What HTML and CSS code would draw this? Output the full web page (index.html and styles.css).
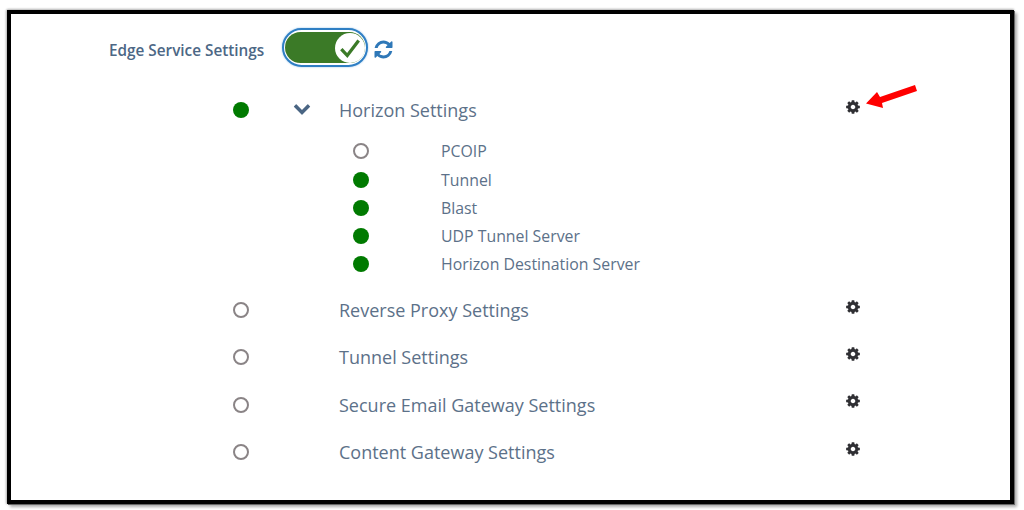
FILE: index.html
```html
<!DOCTYPE html>
<html lang="en">
<head>
    <meta charset="UTF-8">
    <meta name="viewport" content="width=device-width, initial-scale=1.0">
    <title>Edge Service Settings</title>
    <link rel="stylesheet" href="styles.css">
</head>
<body>
    <svg width="0" height="0" class="icon-defs">
        <symbol id="cog" viewBox="0 0 1792 1792">
            <path d="M1152 896q0-106-75-181t-181-75-181 75-75 181 75 181 181 75 181-75 75-181zm512-109v222q0 12-8 23t-20 13l-185 28q-19 54-39 91 35 50 107 138 10 12 10 25t-9 23q-27 37-99 108t-94 71q-12 0-26-9l-138-108q-44 23-91 38-16 136-29 186-7 28-36 28h-222q-14 0-24.500-8.500t-11.500-21.500l-28-184q-49-16-90-37l-141 107q-10 9-25 9-14 0-25-11-126-114-165-168-7-10-7-23 0-12 8-23 15-21 51-66.500t54-70.500q-27-50-41-99l-183-27q-13-2-21-12.500t-8-23.500v-222q0-12 8-23t19-13l186-28q14-46 39-92-40-57-107-138-10-12-10-24 0-10 9-23 26-36 98.500-107.500t94.500-71.500q13 0 26 10l138 107q44-23 91-38 16-136 29-186 7-28 36-28h222q14 0 24.500 8.500t11.500 21.500l28 184q49 16 90 37l142-107q9-9 24-9 13 0 25 10 129 119 165 170 7 8 7 22 0 12-8 23-15 21-51 66.500t-54 70.500q26 50 41 98l183 28q13 2 21 12.500t8 23.500z"/>
        </symbol>
    </svg>

    <div class="frame">
        <!-- Top switch -->
        <div class="service-head">
            <span class="service-title">Edge Service Settings</span>
            <span class="toggle">
                <span class="toggle-track">
                    <span class="toggle-knob">
                        <svg viewBox="0 0 24 24" class="toggle-check"><path d="M4 13l5.500 6L20 5"/></svg>
                    </span>
                </span>
            </span>
            <svg class="refresh" viewBox="0 0 1792 1792"><path d="M1639 1056q0 5-1 7-64 268-268 434.500t-478 166.500q-146 0-282.500-55t-243.500-157l-129 129q-19 19-45 19t-45-19-19-45v-448q0-26 19-45t45-19h448q26 0 45 19t19 45-19 45l-137 137q71 66 161 102t187 36q134 0 250-65t186-179q11-17 53-117 8-23 30-23h192q13 0 22.500 9.500t9.500 22.500zm25-800v448q0 26-19 45t-45 19h-448q-26 0-45-19t-19-45 19-45l138-138q-148-137-349-137-134 0-250 65t-186 179q-11 17-53 117-8 23-30 23h-199q-13 0-22.500-9.500t-9.500-22.500v-7q65-268 270-434.500t480-166.500q146 0 284 55.500t245 156.500l130-129q19-19 45-19t45 19 19 45z"/></svg>
        </div>

        <!-- Horizon, expanded -->
        <div class="row row-first">
            <span class="dot on"></span>
            <svg class="chevron" viewBox="0 0 1792 1792"><path d="M1683 808l-742 741q-19 19-45 19t-45-19l-742-741q-19-19-19-45.500t19-45.500l166-165q19-19 45-19t45 19l531 531 531-531q19-19 45-19t45 19l166 165q19 19 19 45.500t-19 45.500z"/></svg>
            <span class="row-label">Horizon Settings</span>
            <svg class="cog"><use href="#cog"/></svg>
        </div>
        <div class="sub-list">
            <div class="sub-row"><span class="dot"></span><span class="sub-label">PCOIP</span></div>
            <div class="sub-row"><span class="dot on"></span><span class="sub-label">Tunnel</span></div>
            <div class="sub-row"><span class="dot on"></span><span class="sub-label">Blast</span></div>
            <div class="sub-row"><span class="dot on"></span><span class="sub-label">UDP Tunnel Server</span></div>
            <div class="sub-row"><span class="dot on"></span><span class="sub-label">Horizon Destination Server</span></div>
        </div>

        <!-- Other services -->
        <div class="row">
            <span class="dot"></span>
            <span></span>
            <span class="row-label">Reverse Proxy Settings</span>
            <svg class="cog"><use href="#cog"/></svg>
        </div>
        <div class="row">
            <span class="dot"></span>
            <span></span>
            <span class="row-label">Tunnel Settings</span>
            <svg class="cog"><use href="#cog"/></svg>
        </div>
        <div class="row">
            <span class="dot"></span>
            <span></span>
            <span class="row-label">Secure Email Gateway Settings</span>
            <svg class="cog"><use href="#cog"/></svg>
        </div>
        <div class="row">
            <span class="dot"></span>
            <span></span>
            <span class="row-label">Content Gateway Settings</span>
            <svg class="cog"><use href="#cog"/></svg>
        </div>

        <!-- Red annotation arrow -->
        <svg class="arrow" viewBox="0 0 54 30"><path d="M1 19.500L12 8l3 5L50 1l2 6-35 12 1 5z"/></svg>
    </div>
</body>
</html>
```

FILE: styles.css
```css
html, body {
    margin: 0;
    height: 100%;
    background: #fff;
}
body {
    font-family: "Open Sans", sans-serif;
    overflow: hidden;
}
.icon-defs {
    display: block;
}
.frame {
    position: relative;
    box-sizing: border-box;
    width: 1007px;
    height: 494px;
    margin: 10px 0 0 7px;
    border: 4px solid #000;
    box-shadow: 1px 1px 0 #666, 3px 3px 3px #aaa, 0 -1px 2px #bbb, -1px 0 2px #bbb;
    background: #fff;
}
.service-head {
    display: flex;
    align-items: center;
    height: 39px;
    margin-top: 16px;
    padding-left: 98px;
}
.service-title {
    width: 173px;
    font-size: 15.3px;
    font-weight: 600;
    color: #4c6785;
    white-space: nowrap;
}
.toggle {
    box-sizing: border-box;
    width: 86px;
    height: 39px;
    margin-bottom: 4px;
    padding: 2px 1px;
    border: 2px solid #2f7fc4;
    border-radius: 20px;
    background: #fff;
    box-shadow: 0 0 2px #8dbde6;
}
.toggle-track {
    display: flex;
    justify-content: flex-end;
    align-items: center;
    height: 31px;
    border-radius: 16px;
    background: #3b7a27;
}
.toggle-knob {
    display: flex;
    justify-content: center;
    align-items: center;
    width: 30px;
    height: 30px;
    border-radius: 50%;
    background: #fff;
}
.toggle-check {
    width: 26px;
    height: 26px;
    fill: none;
    stroke: #3b7a27;
    stroke-width: 3;
}
.refresh {
    width: 21px;
    height: 21px;
    margin: 0 0 0 5px;
    fill: #2f78b8;
}
.row {
    display: grid;
    grid-template-columns: 60px 46px 506px 16px;
    align-items: center;
    height: 47.3px;
    padding-left: 222px;
}
.row-first {
    margin-top: 17px;
}
.row-first .cog {
    margin-bottom: 5px;
}
.row-label {
    font-size: 18px;
    color: #5c7189;
    white-space: nowrap;
}
.dot {
    box-sizing: border-box;
    display: block;
    width: 16px;
    height: 16px;
    border: 2.5px solid #8a8486;
    border-radius: 50%;
    background: #fff;
}
.dot.on {
    border: 0;
    background: #007a00;
}
.chevron {
    width: 18px;
    height: 18px;
    margin-bottom: 4px;
    fill: #4a6583;
}
.cog {
    width: 16px;
    height: 16px;
    margin-bottom: 7px;
    fill: #2f2f33;
}
.sub-list {
    padding: 4px 0 8px 342px;
}
.sub-row {
    display: grid;
    grid-template-columns: 88px auto;
    align-items: center;
    height: 28.25px;
}
.sub-label {
    font-size: 15.85px;
    color: #5c7189;
    white-space: nowrap;
}
.arrow {
    position: absolute;
    left: 854px;
    top: 70px;
    width: 54px;
    height: 30px;
    fill: #f00;
}
```
